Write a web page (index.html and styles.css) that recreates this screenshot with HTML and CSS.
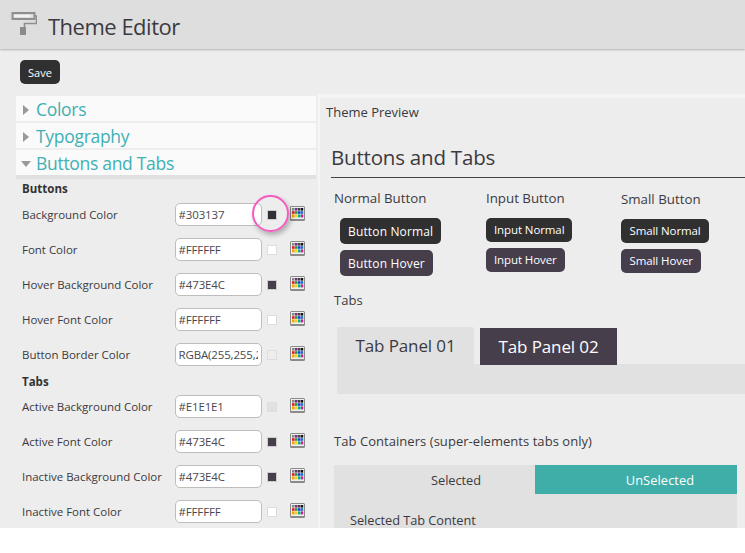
FILE: index.html
```html
<!DOCTYPE html>
<html lang="en">
<head>
    <meta charset="UTF-8">
    <meta name="viewport" content="width=device-width, initial-scale=1.0">
    <title>Theme Editor</title>
    <link rel="stylesheet" href="styles.css">
</head>
<body>
    <svg width="0" height="0" class="defs">
        <symbol id="picker" viewBox="0 0 15 15">
            <rect x="0" y="0" width="15" height="15" rx="1.5" fill="#8a8a8a"/>
            <rect x="1" y="1" width="13" height="12" fill="#eee"/>
            <rect x="2" y="2" width="2.6" height="2.6" fill="#888"/>
            <rect x="5" y="2" width="2.6" height="2.6" fill="#7b2d8e"/>
            <rect x="8" y="2" width="2.6" height="2.6" fill="#444"/>
            <rect x="11" y="2" width="2.2" height="2.6" fill="#111"/>
            <rect x="2" y="5.2" width="2.6" height="2.6" fill="#d81e1e"/>
            <rect x="5" y="5.2" width="2.6" height="2.6" fill="#1a9c3c"/>
            <rect x="8" y="5.2" width="2.6" height="2.6" fill="#1e3fd8"/>
            <rect x="11" y="5.2" width="2.2" height="2.6" fill="#1a6fb0"/>
            <rect x="2" y="8.4" width="2.6" height="3" fill="#f7a400"/>
            <rect x="5" y="8.4" width="2.6" height="3" fill="#f2d21a"/>
            <rect x="8" y="8.4" width="2.6" height="3" fill="#10a890"/>
            <rect x="11" y="8.4" width="2.2" height="3" fill="#e0158c"/>
        </symbol>
    </svg>

    <div class="header">
        <svg class="header_icon" width="26" height="24" viewBox="0 0 26 24">
            <rect x="1.5" y="2" width="22" height="6" fill="#dcdcdc" stroke="#8e8e8e" stroke-width="2"/>
            <rect x="3" y="4" width="17" height="2" fill="#f2f2f2"/>
            <path d="M24 5h1.5v7.5H13.5V16" fill="none" stroke="#8e8e8e" stroke-width="1.6"/>
            <rect x="9" y="16" width="6" height="9" fill="#8a8a8a"/>
        </svg>
        <h1 class="header_title">Theme Editor</h1>
    </div>

    <div class="main">
        <div class="toolbar">
            <button class="btn_save">Save</button>
        </div>

        <div class="columns">
            <div class="sidebar">
                <div class="acc_head"><span class="arrow_right"></span>Colors</div>
                <div class="acc_head"><span class="arrow_right"></span>Typography</div>
                <div class="acc_head acc_open"><span class="arrow_down"></span>Buttons and Tabs</div>

                <div class="group_title">Buttons</div>
                <div class="field"><label>Background Color</label><input type="text" value="#303137"><span class="swatch sw_dark"></span><svg class="picker"><use href="#picker"/></svg></div>
                <div class="field"><label>Font Color</label><input type="text" value="#FFFFFF"><span class="swatch sw_white"></span><svg class="picker"><use href="#picker"/></svg></div>
                <div class="field"><label>Hover Background Color</label><input type="text" value="#473E4C"><span class="swatch sw_plum"></span><svg class="picker"><use href="#picker"/></svg></div>
                <div class="field"><label>Hover Font Color</label><input type="text" value="#FFFFFF"><span class="swatch sw_white"></span><svg class="picker"><use href="#picker"/></svg></div>
                <div class="field"><label>Button Border Color</label><input type="text" value="RGBA(255,255,255,0)"><span class="swatch sw_clear"></span><svg class="picker"><use href="#picker"/></svg></div>

                <div class="group_title group_tabs">Tabs</div>
                <div class="field"><label>Active Background Color</label><input type="text" value="#E1E1E1"><span class="swatch sw_grey"></span><svg class="picker"><use href="#picker"/></svg></div>
                <div class="field"><label>Active Font Color</label><input type="text" value="#473E4C"><span class="swatch sw_plum"></span><svg class="picker"><use href="#picker"/></svg></div>
                <div class="field"><label>Inactive Background Color</label><input type="text" value="#473E4C"><span class="swatch sw_plum"></span><svg class="picker"><use href="#picker"/></svg></div>
                <div class="field"><label>Inactive Font Color</label><input type="text" value="#FFFFFF"><span class="swatch sw_white"></span><svg class="picker"><use href="#picker"/></svg></div>

                <!-- pink highlight round the first swatch -->
                <div class="callout"></div>
            </div>

            <div class="preview">
                <div class="preview_label">Theme Preview</div>
                <h2 class="preview_title">Buttons and Tabs</h2>

                <div class="btn_columns">
                    <div class="btn_col col_normal">
                        <div class="col_label">Normal Button</div>
                        <a class="demo_btn btn_normal">Button Normal</a>
                        <a class="demo_btn btn_normal btn_hover">Button Hover</a>
                    </div>
                    <div class="btn_col col_input">
                        <div class="col_label">Input Button</div>
                        <a class="demo_btn btn_input">Input Normal</a>
                        <a class="demo_btn btn_input btn_hover">Input Hover</a>
                    </div>
                    <div class="btn_col col_small">
                        <div class="col_label">Small Button</div>
                        <a class="demo_btn btn_small">Small Normal</a>
                        <a class="demo_btn btn_small btn_hover">Small Hover</a>
                    </div>
                </div>

                <div class="section_label">Tabs</div>
                <div class="tabs">
                    <div class="tab_row">
                        <div class="tab tab_active">Tab Panel 01</div>
                        <div class="tab tab_inactive">Tab Panel 02</div>
                    </div>
                    <div class="tab_body"></div>
                </div>

                <div class="section_label label_containers">Tab Containers (super-elements tabs only)</div>
                <div class="container">
                    <div class="container_tabs">
                        <div class="ct_tab ct_selected">Selected</div>
                        <div class="ct_tab ct_unselected">UnSelected</div>
                    </div>
                    <div class="container_body">Selected Tab Content</div>
                </div>
            </div>
        </div>
    </div>
</body>
</html>
```

FILE: styles.css
```css
* {
    margin: 0;
    padding: 0;
    box-sizing: border-box;
}

html, body {
    height: 553px;
    overflow: hidden;
    background: #fff;
}

body {
    font-family: "Open Sans", "Noto Sans", sans-serif;
    color: #3c3a40;
}

.defs {
    display: block;
    height: 0;
}

/* Header */
.header {
    height: 49px;
    background: #dedede;
    box-shadow: 0 1px 2px rgba(0, 0, 0, 0.25);
    display: flex;
    align-items: flex-start;
    position: relative;
}

.header_icon {
    margin: 11px 0 0 11px;
}

.header_title {
    font-size: 22px;
    font-weight: 400;
    line-height: 30px;
    margin: 11px 0 0 11px;
    letter-spacing: -0.5px;
}

/* Main area */
.main {
    height: 479px;
    background: #ededed;
    overflow: hidden;
}

.toolbar {
    height: 47px;
    padding: 11px 0 0 20px;
}

.btn_save {
    display: block;
    width: 40px;
    height: 24px;
    background: #303030;
    color: #fff;
    border: none;
    border-radius: 5px;
    font-family: inherit;
    font-size: 11px;
}

.columns {
    display: flex;
    height: 432px;
}

/* Left column */
.sidebar {
    width: 316px;
    padding-left: 16px;
    position: relative;
    flex-shrink: 0;
}

.acc_head {
    height: 25px;
    margin-bottom: 2px;
    background: #fafafa;
    color: #3fb0b5;
    font-size: 17.5px;
    line-height: 27px;
    padding-left: 20px;
    position: relative;
    letter-spacing: -0.3px;
}

.acc_open {
    margin-bottom: 0;
    height: 29px;
    border-bottom: 4px solid #e0e0e0;
}

.arrow_right {
    position: absolute;
    left: 7px;
    top: 9px;
    border-left: 6px solid #999;
    border-top: 5px solid transparent;
    border-bottom: 5px solid transparent;
}

.arrow_down {
    position: absolute;
    left: 5px;
    top: 11px;
    border-top: 6px solid #999;
    border-left: 5px solid transparent;
    border-right: 5px solid transparent;
}

.group_title {
    font-size: 11.5px;
    font-weight: 700;
    line-height: 18px;
    height: 17px;
    margin: 1px 0 0 6px;
    color: #333;
}

.group_tabs {
    height: 16px;
}

.field {
    height: 35px;
    display: flex;
    align-items: center;
    padding-left: 6px;
}

.field label {
    width: 153px;
    font-size: 11.5px;
    letter-spacing: -0.02px;
    white-space: nowrap;
}

.field input {
    width: 87px;
    height: 23px;
    border: 1px solid #bdbdbd;
    border-radius: 5px;
    background: #fff;
    font-family: inherit;
    font-size: 11.5px;
    color: #4a4850;
    padding: 0 3px 0 2.5px;
    letter-spacing: -0.15px;
}

.swatch {
    width: 10px;
    height: 10px;
    margin-left: 5px;
    border: 1px solid #ddd;
    flex-shrink: 0;
}

.sw_dark { background: #303137; border-color: #ccc; }
.sw_white { background: #fff; }
.sw_plum { background: #473e4c; border-color: #ccc; }
.sw_grey { background: #e1e1e1; }
.sw_clear { background: #ededed; }

.picker {
    width: 15px;
    height: 15px;
    margin: -3px 0 0 13px;
    flex-shrink: 0;
}

.callout {
    position: absolute;
    left: 252px;
    top: 99px;
    width: 37px;
    height: 37px;
    border: 2px solid #f45cc0;
    border-radius: 50%;
    box-shadow: 2px 3px 5px rgba(0, 0, 0, 0.28);
}

/* Right column */
.preview {
    flex: 1;
    margin: -2px 0 0 2px;
    background: #ededed;
    border-top: 4px solid #f5f5f5;
    border-left: 2px solid #f5f5f5;
    padding-left: 6px;
    min-width: 0;
}

.preview_label {
    font-size: 13px;
    line-height: 18px;
    margin-top: 5px;
}

.preview_title {
    font-size: 20.5px;
    font-weight: 400;
    line-height: 28px;
    margin: 22px 0 0 5px;
    height: 35px;
    border-bottom: 1px solid #444;
    letter-spacing: -0.2px;
}

.btn_columns {
    display: flex;
    height: 111px;
}

.btn_col {
    display: flex;
    flex-direction: column;
    align-items: flex-start;
}

.col_normal { width: 152px; margin-left: 8px; }
.col_input { width: 135px; }

.col_label {
    font-size: 13.3px;
    line-height: 18px;
    margin-top: 11px;
    margin-bottom: 5px;
}

.col_small .col_label {
    margin-top: 12px;
}

.demo_btn {
    display: block;
    color: #fff;
    background: #303030;
    border-radius: 5px;
    white-space: nowrap;
    margin-top: 6px;
}

.btn_hover {
    background: #473e4c;
}

.btn_normal {
    margin-left: 6px;
    height: 26px;
    line-height: 27px;
    padding: 0 8px;
    font-size: 12px;
    letter-spacing: 0.15px;
}

.btn_input {
    height: 24px;
    line-height: 23px;
    padding: 0 8px;
    font-size: 11.5px;
    letter-spacing: -0.1px;
}

.btn_small {
    height: 24px;
    line-height: 24px;
    padding: 0 8.5px;
    font-size: 11.5px;
    letter-spacing: -0.1px;
}

.section_label {
    font-size: 13px;
    line-height: 18px;
    margin: 2px 0 0 8px;
    letter-spacing: 0.05px;
}

/* Tabs sample */
.tabs {
    margin: 18px 0 0 11px;
}

.tab_row {
    display: flex;
    align-items: flex-start;
    height: 37px;
}

.tab {
    width: 137px;
    font-size: 17px;
    text-align: center;
    letter-spacing: -0.12px;
}

.tab_active {
    height: 37px;
    line-height: 37px;
    background: #e1e1e1;
    border-radius: 2px 2px 0 0;
}

.tab_inactive {
    height: 37px;
    line-height: 38px;
    margin: 1px 0 0 6px;
    background: #473e4c;
    color: #fff;
    position: relative;
}

.tab_body {
    height: 30px;
    background: #e1e1e1;
}

/* Tab container sample */
.label_containers {
    margin-top: 38px;
}

.container {
    width: 403px;
    margin: 15px 0 0 8px;
    background: #e1e1e1;
    height: 70px;
}

.container_tabs {
    display: flex;
    height: 29px;
}

.ct_tab {
    line-height: 30px;
    font-size: 12.8px;
    text-align: center;
    letter-spacing: -0.05px;
}

.ct_selected {
    width: 201px;
    padding-left: 43px;
}

.ct_unselected {
    width: 202px;
    background: #3fada8;
    color: #fff;
    padding-left: 48px;
    letter-spacing: 0.1px;
}

.container_body {
    font-size: 12.8px;
    line-height: 18px;
    padding: 17px 0 0 16px;
    letter-spacing: -0.05px;
}
```
